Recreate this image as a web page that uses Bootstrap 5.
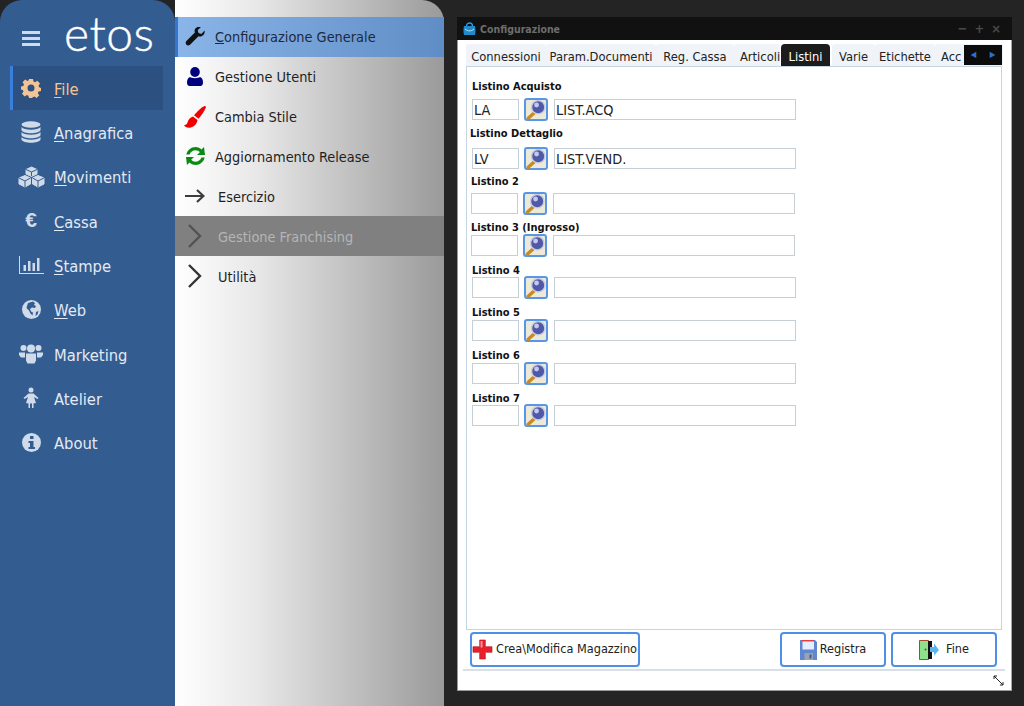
<!DOCTYPE html>
<html lang="it">
<head>
<meta charset="utf-8">
<title>Configurazione</title>
<link href="https://cdn.jsdelivr.net/npm/bootstrap@5.3.0/dist/css/bootstrap.min.css" rel="stylesheet">
<style>
html,body{height:100%;}
body{background:#242424;font-family:"DejaVu Sans Condensed","DejaVu Sans",sans-serif;overflow:hidden;}
.app{width:1024px;height:706px;}
.side{width:175px;height:706px;background:#335c91;border-radius:22px 22px 0 0;flex:none;}
.brand{height:66px;padding-left:22px;}
.burger{width:18px;height:15px;border-top:3px solid #cfdbe9;border-bottom:3px solid #cfdbe9;position:relative;margin-top:11px;}
.burger::after{content:"";position:absolute;left:0;right:0;top:3px;height:3px;background:#cfdbe9;}
.logo{font-family:Lato,"Open Sans",sans-serif;font-weight:300;font-size:48px;line-height:48px;color:#fff;margin-left:24px;letter-spacing:.5px;-webkit-text-stroke:.4px #fff;}
.sitem{height:44.3px;width:153px;margin-left:10px;padding-left:3px;color:#e3eaf3;font-size:16.4px;text-decoration:none;}
.sitem u{text-underline-offset:2px;}
.sitem.on{background:#2c5180;border-left:3px solid #3b7fdc;padding-left:0;color:#f3c596;}
.sico{width:36px;flex:none;display:flex;justify-content:center;}
.sico svg{display:block;}
.euro{font-size:21px;line-height:21px;font-weight:700;color:#cfdbe9;font-family:"Liberation Sans",sans-serif;margin-top:-4px;}
.stxt{margin-left:5px;padding-top:4px;}
.panel{width:269px;height:706px;flex:none;background:linear-gradient(90deg,#fff 0%,#e8e8e8 30%,#9a9a9a 100%);border-radius:0 22px 0 0;padding-top:17px;}
.pitem{height:39.85px;color:#1f1f1f;font-size:14.4px;text-decoration:none;padding-left:9px;}
.pitem.on{background:linear-gradient(90deg,#8ab5e8,#5f8dc5);border-left:3px solid #3576cf;padding-left:6px;color:#1c2a40;}
.pitem.off{background:#808080;color:#b5b5b5;}
.pico{width:22px;flex:none;display:flex;justify-content:center;margin-right:9px;}
.ptxt{padding-top:2px;}
.ptxt-in{margin-left:3px;padding-top:3px;}
.win{width:555px;height:674px;margin:17px 0 0 13px;flex:none;background:#fff;border:1px solid #111;border-top:0;border-right-color:#aaa;border-bottom:1px solid #999;border-left-color:#999;}
.wtitle{height:23px;background:#111;margin:0 -1px;color:#6d6d6d;font-size:10.5px;font-weight:700;padding:0 11px 0 6px;}
.wtxt{padding-top:2px;}
.wctl{color:#4a4a4a;font-size:13px;font-weight:700;gap:7px;}
.tabsw{height:26px;margin:0 8px;position:relative;overflow:hidden;}
.tabstrip{flex-wrap:nowrap;padding-top:4px;height:26px;}
.tabx{font-size:12.8px;color:#222;background:#f0f3f8;height:22px;line-height:25px;text-align:center;white-space:nowrap;flex:none;border-radius:3px 3px 0 0;text-decoration:none;overflow:hidden;}
.tabx.on{background:#1c1c1c;color:#fff;margin:0 2px 0 1px;border-radius:4px 4px 0 0;}
.t1{width:80px;}.t2{width:110px;}.t3{width:78px;}.t4{width:46px;text-align:left;padding-left:6px;}.t5{width:49px;}.t6{width:43px;}.t7{width:60px;}.t8{width:70px;text-align:left;padding-left:6px;}
.tabarrows{position:absolute;right:1px;top:5px;width:38px;height:20px;background:#0c0c0c;color:#2d6fd0;font-size:8px;}
.page{height:564px;margin:0 9px 0 8px;border:1px solid #c5d5e2;padding:0;}
.fgroup{font-size:11px;font-weight:700;color:#111;line-height:13px;}
.fgroup label{display:block;margin:0;white-space:nowrap;}
.frow{gap:5px;height:21px;}
.finp{height:21px;border:1px solid #c6ced6;border-radius:0;padding:0 1px;font-size:14.4px;font-weight:400;line-height:19px;color:#222;background:#fff;box-shadow:none;font-family:inherit;}
.fa{width:47px;flex:none;}
.fb{width:242px;flex:none;margin-left:1px;}
.lens{width:24px;height:23px;padding:0;background:#ece9d8;border:2px solid #5797e6;border-radius:3px;flex:none;margin-top:-1px;display:flex;align-items:center;justify-content:center;}
.g1{margin:13px 0 0 5px;}.g1 label{margin-bottom:6px;}
.g2{margin:7px 0 0 3px;}.g2 label{margin-bottom:8px;}.g2 .frow{margin-left:2px;}
.g3{margin:6px 0 0 4px;}.g3 label{margin-bottom:5px;}
.g4{margin:7px 0 0 4px;}.g4 label{margin-bottom:1px;}
.g5{margin:8px 0 0 5px;}.g5 label{margin-bottom:0;}
.g6{margin:8px 0 0 5px;}.g6 label{margin-bottom:1px;}
.bbar{height:39px;padding:2px 14px 0 12px;}
.bbtn{height:35px;background:#fff;border:2px solid #4d90e6;border-radius:4px;color:#222;font-size:12.6px;padding:0;display:flex;align-items:center;justify-content:center;gap:3px;white-space:nowrap;font-family:inherit;}
.bbtn:hover{background:#fff;border-color:#4d90e6;color:#222;}
.bcrea{width:170px;justify-content:flex-start;overflow:hidden;}
.bsm{width:106px;}
.bnext{margin-left:5px;}
.rule{height:2px;background:#d9e0e6;margin:0 6px 0 5px;}
.grip{height:19px;padding-right:7px;}
</style>
</head>
<body>
<div class="app d-flex">
  <nav class="side">
    <div class="brand d-flex align-items-center">
      <span class="burger"></span>
      <span class="logo">etos</span>
    </div>
    <a class="sitem on d-flex align-items-center" href="#"><span class="sico"><svg width="20" height="20" viewBox="0 0 20 20"><path fill="#f3c596" fill-rule="evenodd" d="M8 1h4l.5 2.6 1.6.7L16.300 2.800 19 5.500 17.500 7.700l.7 1.600L20 10v3l-2.500.6-.7 1.600 1.500 2.100-2.700 2.700-2.200-1.500-1.600.7L11 20H8l-.6-2.300-1.600-.7-2.100 1.500L1 15.800l1.500-2.200-.7-1.600L0 11.500v-3l2.300-.6.700-1.600L1.500 4.200 4.200 1.500 6.400 3l1.100-.5zM10 6.500a3.500 3.500 0 1 0 0 7 3.500 3.500 0 0 0 0-7z"/></svg></span><span class="stxt"><u>F</u>ile</span></a>
    <a class="sitem d-flex align-items-center" href="#"><span class="sico"><svg width="20" height="22" viewBox="0 0 20 22" fill="#cfdbe9"><ellipse cx="10" cy="3.500" rx="9.500" ry="3.200"/><path d="M.5 6c1.500 2 5 2.700 9.500 2.700S18 8 19.500 6v3.200c-1 2-5 3-9.500 3s-8.500-1-9.500-3zM.5 11c1.500 2 5 2.700 9.500 2.700S18 13 19.500 11v3.200c-1 2-5 3-9.500 3s-8.500-1-9.500-3zM.5 16c1.500 2 5 2.700 9.500 2.700S18 18 19.500 16v2.700c-1 2-5 3-9.500 3s-8.500-1-9.500-3z"/></svg></span><span class="stxt"><u>A</u>nagrafica</span></a>
    <a class="sitem d-flex align-items-center" href="#"><span class="sico"><svg width="27" height="22" viewBox="0 0 27 22" fill="none" stroke="#cfdbe9"><path fill="#cfdbe9" stroke-width="1" d="M13.500 1l5.500 2.500v4.500l-5.500 2.500L8 8V3.500z"/><path fill="#cfdbe9" stroke-width="1" d="M7 9.500l5.500 2.500v6L7 21l-6-3v-6z"/><path fill="#cfdbe9" stroke-width="1" d="M20 9.500l6 2.500v6l-6 3-5.500-3v-6z"/><path stroke="#335c91" stroke-width="1" d="M8 3.500l5.500 2.500L19 3.500M13.500 6v4M1 12l6 3 5.500-3M7 15v6M14.500 12l5.500 3 6-3M20 15v6"/></svg></span><span class="stxt"><u>M</u>ovimenti</span></a>
    <a class="sitem d-flex align-items-center" href="#"><span class="sico"><span class="euro">€</span></span><span class="stxt"><u>C</u>assa</span></a>
    <a class="sitem d-flex align-items-center" href="#"><span class="sico"><svg width="25" height="18" viewBox="0 0 25 18" fill="#cfdbe9"><path d="M0 0h1v17h24v1H0z"/><rect x="4.500" y="9" width="2.500" height="6"/><rect x="9" y="5" width="2.500" height="10"/><rect x="13.500" y="7" width="2.500" height="8"/><rect x="18" y="2" width="2.500" height="13"/></svg></span><span class="stxt"><u>S</u>tampe</span></a>
    <a class="sitem d-flex align-items-center" href="#"><span class="sico"><svg width="19" height="19" viewBox="0 0 19 19"><circle cx="9.500" cy="9.500" r="9.500" fill="#cfdbe9"/><path fill="#335c91" d="M6 3l5-1.500 2 1.500-1 2 2 1-1 2-3-.5-2 1.500 1 2.500 2 1-.5 3-2-2-1.500-3-2.500-2.500L5 6zM14 12l2.500-1-1 3.500-2 1.500z"/></svg></span><span class="stxt"><u>W</u>eb</span></a>
    <a class="sitem d-flex align-items-center" href="#"><span class="sico"><svg width="24" height="20" viewBox="0 0 24 20" fill="#cfdbe9"><circle cx="4.500" cy="4" r="3"/><circle cx="19.500" cy="4" r="3"/><circle cx="12" cy="4.500" r="4"/><path d="M0 8.500h6v5H2L0 11zM24 8.500h-6v5h4l2-2.500zM7 9.500h10v7l-1.500 3h-7L7 16.500z"/></svg></span><span class="stxt">Marketing</span></a>
    <a class="sitem d-flex align-items-center" href="#"><span class="sico"><svg width="16" height="22" viewBox="0 0 16 22" fill="#cfdbe9"><circle cx="8" cy="3" r="2.500"/><path d="M5.500 6.500h5L15.500 11l-1 1-3.500-2 2 6-2.500.5V21H9v-4.500H7V21H5.500v-4.500L3 16l2-6-3.500 2-1-1z"/></svg></span><span class="stxt">Atelier</span></a>
    <a class="sitem d-flex align-items-center" href="#"><span class="sico"><svg width="19" height="19" viewBox="0 0 19 19"><circle cx="9.500" cy="9.500" r="9.500" fill="#cfdbe9"/><path fill="#335c91" d="M8 3h3.500v3H8zM6.500 8h5v6h1.500v2H6.500v-2H8v-4H6.500z"/></svg></span><span class="stxt">About</span></a>
  </nav>

  <div class="panel">
    <a class="pitem on d-flex align-items-center" href="#"><span class="pico"><svg width="20" height="20" viewBox="0 0 20 20" fill="#111"><path d="M19.500 3.500c.6 2.700-.6 5-3 5.800-1 .3-2 .2-3-.1L5 17.700c-1 1-2.700 1-3.600 0s-1-2.600 0-3.600l8.500-8.500c-.4-1-.4-2.100-.1-3.100C10.700.2 13.500-.7 16-.1l-3.300 3.300.8 2.900 2.900.8z"/></svg></span><span class="ptxt"><u>C</u>onfigurazione Generale</span></a>
    <a class="pitem d-flex align-items-center" href="#"><span class="pico"><svg width="16" height="19" viewBox="0 0 16 19" fill="#00007f"><ellipse cx="8" cy="5" rx="4.800" ry="5"/><path d="M3 10c1.500 1.500 8.500 1.500 10 0 2 .7 3 2.500 3 5.500 0 2-1 3.500-2.500 3.500h-11C1 19 0 17.500 0 15.500 0 12.500 1 10.700 3 10z"/></svg></span><span class="ptxt">Gestione Utenti</span></a>
    <a class="pitem d-flex align-items-center" href="#"><span class="pico"><svg width="22" height="22" viewBox="0 0 22 22" fill="#f00000"><path d="M20.500 0c1 0 1.700.7 1.300 1.800-1.500 3.500-4.500 8-7.300 11l-4.500-3.500C13 6 17 1.500 20.500 0z"/><path d="M9 10.500l4.500 3.500c-.5 3.800-3.500 7-7.500 7.700C3.500 22.200 1 21 0 19c2 .3 3-.8 3.500-2.500C4.300 13.500 6 11.500 9 10.500z"/></svg></span><span class="ptxt">Cambia Stile</span></a>
    <a class="pitem d-flex align-items-center" href="#"><span class="pico"><svg width="19" height="18" viewBox="0 0 19 18" fill="#0a8a14"><path d="M9.500 0c2.500 0 4.500 1 6 2.500L18 0l1 8h-8l2.800-2.800C12.800 4 11.300 3.300 9.500 3.300 6.800 3.300 4.500 5 3.500 7.500H.3C1.300 3.200 5 0 9.500 0z"/><path d="M9.500 18c-2.500 0-4.500-1-6-2.500L1 18l-1-8h8l-2.800 2.800c1 1.200 2.500 1.900 4.300 1.900 2.700 0 5-1.700 6-4.200h3.200C17.700 14.800 14 18 9.500 18z"/></svg></span><span class="ptxt">Aggiornamento Release</span></a>
    <a class="pitem d-flex align-items-center" href="#"><span class="pico"><svg width="20" height="14" viewBox="0 0 20 14" fill="none" stroke="#3c3c3c" stroke-width="2.200"><path d="M0 7h18M12 1l6.500 6-6.500 6"/></svg></span><span class="ptxt-in">Esercizio</span></a>
    <a class="pitem off d-flex align-items-center" href="#"><span class="pico"><svg width="14" height="24" viewBox="0 0 14 24" fill="none" stroke="#525252" stroke-width="2.400"><path d="M1 1l11 11L1 23"/></svg></span><span class="ptxt-in">Gestione Franchising</span></a>
    <a class="pitem d-flex align-items-center" href="#"><span class="pico"><svg width="14" height="24" viewBox="0 0 14 24" fill="none" stroke="#333" stroke-width="2.400"><path d="M1 1l11 11L1 23"/></svg></span><span class="ptxt-in">Utilità</span></a>
  </div>

  <section class="win d-flex flex-column">
    <div class="wtitle d-flex align-items-center">
      <svg class="me-1" width="13" height="15" viewBox="0 0 13 15"><path fill="none" stroke="#2b9be0" stroke-width="1.300" d="M3.500 5C3.500 1 9.500 1 9.500 5"/><path fill="#2189cc" d="M1 5h11c.7 3 .7 6 0 9H1C.3 11 .3 8 1 5z"/><path fill="none" stroke="#bfe3f7" d="M2 8c3 2.500 6 2.500 9 0"/></svg>
      <span class="wtxt">Configurazione</span>
      <span class="wctl d-flex ms-auto"><span>−</span><span>+</span><span>×</span></span>
    </div>
    <div class="tabsw">
      <div class="nav tabstrip">
        <a class="tabx t1" href="#">Connessioni</a>
        <a class="tabx t2" href="#">Param.Documenti</a>
        <a class="tabx t3" href="#">Reg. Cassa</a>
        <a class="tabx t4" href="#">Articoli</a>
        <a class="tabx t5 on" href="#">Listini</a>
        <a class="tabx t6" href="#">Varie</a>
        <a class="tabx t7" href="#">Etichette</a>
        <a class="tabx t8" href="#">Acc</a>
      </div>
      <div class="tabarrows d-flex align-items-center justify-content-around"><span>◀</span><span>▶</span></div>
    </div>
    <div class="page">
      <div class="fgroup g1"><label>Listino Acquisto</label><div class="frow d-flex"><input class="finp fa" value="LA"><button class="lens" type="button"><svg width="20" height="20" viewBox="0 0 18 18"><use href="#lensI"/></svg></button><input class="finp fb" value="LIST.ACQ"></div></div>
      <div class="fgroup g2"><label>Listino Dettaglio</label><div class="frow d-flex"><input class="finp fa" value="LV"><button class="lens" type="button"><svg width="20" height="20" viewBox="0 0 18 18"><use href="#lensI"/></svg></button><input class="finp fb" value="LIST.VEND."></div></div>
      <div class="fgroup g3"><label>Listino 2</label><div class="frow d-flex"><input class="finp fa"><button class="lens" type="button"><svg width="20" height="20" viewBox="0 0 18 18"><use href="#lensI"/></svg></button><input class="finp fb"></div></div>
      <div class="fgroup g4"><label>Listino 3 (Ingrosso)</label><div class="frow d-flex"><input class="finp fa"><button class="lens" type="button"><svg width="20" height="20" viewBox="0 0 18 18"><use href="#lensI"/></svg></button><input class="finp fb"></div></div>
      <div class="fgroup g5"><label>Listino 4</label><div class="frow d-flex"><input class="finp fa"><button class="lens" type="button"><svg width="20" height="20" viewBox="0 0 18 18"><use href="#lensI"/></svg></button><input class="finp fb"></div></div>
      <div class="fgroup g6"><label>Listino 5</label><div class="frow d-flex"><input class="finp fa"><button class="lens" type="button"><svg width="20" height="20" viewBox="0 0 18 18"><use href="#lensI"/></svg></button><input class="finp fb"></div></div>
      <div class="fgroup g6"><label>Listino 6</label><div class="frow d-flex"><input class="finp fa"><button class="lens" type="button"><svg width="20" height="20" viewBox="0 0 18 18"><use href="#lensI"/></svg></button><input class="finp fb"></div></div>
      <div class="fgroup g5"><label>Listino 7</label><div class="frow d-flex"><input class="finp fa"><button class="lens" type="button"><svg width="20" height="20" viewBox="0 0 18 18"><use href="#lensI"/></svg></button><input class="finp fb"></div></div>
    </div>
    <div class="bbar d-flex">
      <button class="btn bbtn bcrea" type="button"><svg width="21" height="21" viewBox="0 0 22 22"><path fill="#e8202c" stroke="#b01820" stroke-width=".6" d="M8 1h6v7h7v6h-7v7H8v-7H1V8h7z"/><path fill="#ff9aa0" d="M9 2h2v7H2v1.500h0V9h7z"/></svg><span>Crea\Modifica Magazzino</span></button>
      <button class="btn bbtn bsm ms-auto" type="button"><svg width="17" height="20" viewBox="0 0 17 20"><path fill="#5f86d0" d="M0 0h15l2 2v18H0z"/><path fill="#e04040" d="M2 0h12v1.500H2z"/><path fill="#e6eefc" d="M2.500 1.500h11.500v8H2.500z"/><path fill="#9aa3b0" d="M4.500 13h8.500v7H4.500z"/><path fill="#4a5a78" d="M9.500 14.500h2v4h-2z"/></svg><span>Registra</span></button>
      <button class="btn bbtn bsm bnext" type="button"><svg width="20" height="20" viewBox="0 0 20 20"><path fill="#8fe08a" stroke="#a04a30" d="M.5.500h9v19h-9z"/><path fill="#111" d="M9 1h4v18H9z"/><circle cx="6.500" cy="9.500" r="1" fill="#d02020"/><path fill="#5cb4ee" d="M11 7h4V3.500L20 10l-5 5.500V12h-4z"/></svg><span class="ms-1">Fine</span></button>
    </div>
    <div class="rule"></div>
    <div class="grip d-flex align-items-center justify-content-end"><svg width="11" height="11" viewBox="0 0 11 11" fill="none" stroke="#222"><path d="M1 1l9 9M1 4V1h3M7 10h3V7"/></svg></div>
  </section>
</div>
<svg width="0" height="0" class="d-none"><defs>
<symbol id="lensI" viewBox="0 0 18 18"><path stroke="#c98a20" stroke-width="3" stroke-linecap="round" d="M8.500 10.500L2 16.500"/><circle cx="11" cy="6.500" r="6" fill="#5058a8" stroke="#c8ccdc" stroke-width="1.300"/><circle cx="9.500" cy="4.500" r="2.200" fill="#c4c8ec"/></symbol>
</defs></svg>
<script src="https://cdn.jsdelivr.net/npm/bootstrap@5.3.0/dist/js/bootstrap.bundle.min.js"></script>
</body>
</html>
